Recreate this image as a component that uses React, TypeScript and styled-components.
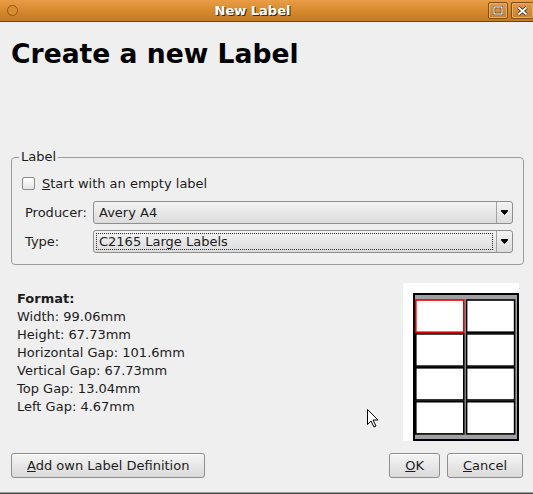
import styled, { createGlobalStyle } from "styled-components";

const GlobalStyle = createGlobalStyle`
  html, body {
    margin: 0;
    padding: 0;
    background: #efefef;
  }
  body {
    font-family: "DejaVu Sans", "Liberation Sans", sans-serif;
    font-size: 13px;
    color: #1c1c1c;
  }
`;

const Window = styled.div`
  position: relative;
  width: 533px;
  height: 494px;
  overflow: hidden;
  display: flex;
  flex-direction: column;
  background: #efefef;
  border-bottom: 1px solid #4a4a4a;
  box-shadow: inset 0 -1px 0 #9a9a9a;
  box-sizing: border-box;
`;

const TitleBar = styled.div`
  height: 21px;
  flex: none;
  display: flex;
  align-items: center;
  background: linear-gradient(#e99d45, #d98b2f 45%, #c47a22);
  border-bottom: 1px solid #6d4615;
`;

const WindowMenu = styled.div`
  width: 9px;
  height: 9px;
  margin-left: 7px;
  border-radius: 50%;
  border: 1px solid #8c5a1c;
  background: #d98c31;
`;

const Title = styled.div`
  flex: 1;
  text-align: center;
  padding-left: 2px;
  font-weight: bold;
  font-size: 13px;
  color: #ffffff;
  text-shadow: 1px 1px 0 #3d2808;
`;

const TitleButton = styled.div<{ $last?: boolean }>`
  width: ${({ $last }) => ($last ? "21px" : "18px")};
  height: 15px;
  margin-left: 3px;
  display: flex;
  align-items: center;
  justify-content: center;
  border: 1px solid #7b4f17;
  border-right-width: ${({ $last }) => ($last ? "0" : "1px")};
  border-radius: 2px;
  background: linear-gradient(#dd9a48, #c7802c);
  box-shadow: inset 0 0 0 1px #e9b060;
`;

const Body = styled.div`
  flex: 1;
  display: flex;
  flex-direction: column;
`;

const Heading = styled.h1`
  margin: 16px 0 0 11px;
  font-size: 26.6px;
  line-height: 32px;
  font-weight: bold;
  color: #000;
`;

const Group = styled.fieldset`
  margin: 79px 9px 0 11px;
  padding: 8px 10px 11px 10px;
  border: 1px solid #9c9c9c;
  border-radius: 4px;
  min-width: 0;
`;

const Legend = styled.legend`
  margin-left: -3px;
  padding: 0 2px;
  line-height: 16px;
`;

const CheckRow = styled.label`
  display: flex;
  align-items: center;
  gap: 7px;
  height: 20px;
  margin-bottom: 8px;
`;

const CheckBox = styled.span`
  width: 11px;
  height: 11px;
  border: 1px solid #8c8c8c;
  border-radius: 2px;
  background: linear-gradient(#ffffff, #e6e6e6);
`;

const FormGrid = styled.div`
  display: grid;
  grid-template-columns: 65px 1fr;
  column-gap: 6px;
  row-gap: 6px;
  align-items: center;
`;

const FieldLabel = styled.span`
  padding-left: 3px;
`;

const Combo = styled.div`
  height: 21px;
  display: flex;
  align-items: stretch;
  border: 1px solid #8e8e8e;
  border-radius: 3px;
  background: linear-gradient(#f3f3f3, #dcdcdc);
`;

const ComboText = styled.div<{ $focused?: boolean }>`
  flex: 1;
  display: flex;
  align-items: center;
  margin: 2px 3px 2px 2px;
  padding-left: 2px;
  border: 1px dotted ${({ $focused }) => ($focused ? "#2a2a2a" : "transparent")};
`;

const ComboArrow = styled.div`
  width: 15px;
  flex: none;
  display: flex;
  align-items: center;
  justify-content: center;
  border-left: 1px solid #a2a2a2;
`;

const InfoRow = styled.div`
  display: flex;
  justify-content: space-between;
  margin: 18px 14px 0 17px;
`;

const FormatList = styled.div`
  padding-top: 7px;
  line-height: 18px;
`;

const FormatTitle = styled.div`
  font-weight: bold;
`;

const Preview = styled.div`
  width: 106px;
  height: 148px;
  padding: 10px 0 0 10px;
  background: #ffffff;
`;

const ButtonRow = styled.div`
  display: flex;
  gap: 7px;
  margin: 12px 10px 0 11px;
`;

const Spacer = styled.div`
  flex: 1;
`;

const Button = styled.button`
  height: 25px;
  padding: 0 15px;
  font-family: "DejaVu Sans", "Liberation Sans", sans-serif;
  font-size: 13px;
  color: #1c1c1c;
  border: 1px solid #8e8e8e;
  border-radius: 3px;
  background: linear-gradient(#f5f5f5, #dadada);
  box-shadow: inset 0 1px 0 #ffffff;
`;

const Cursor = styled.svg`
  position: absolute;
  left: 366px;
  top: 408px;
`;

const Arrow = () => (
  <svg width="7" height="5" viewBox="0 0 7 5">
    <path d="M0 0.5h7M0.5 1.5h6L3.5 4.5z" stroke="#000" fill="#000" strokeWidth="1" />
  </svg>
);

const Mn = ({ children }: { children: string }) => <u>{children}</u>;

const formatLines = [
  "Width: 99.06mm",
  "Height: 67.73mm",
  "Horizontal Gap: 101.6mm",
  "Vertical Gap: 67.73mm",
  "Top Gap: 13.04mm",
  "Left Gap: 4.67mm",
];

const SheetPreview = () => {
  // page 210mm wide drawn at 0.5px/mm
  const cells = [];
  for (let r = 0; r < 4; r++) {
    for (let c = 0; c < 2; c++) {
      cells.push(
        <rect
          key={`${r}-${c}`}
          x={2.8 + c * 50.8}
          y={7 + r * 33.9}
          width={48}
          height={32.2}
          fill="#fff"
          stroke={r === 0 && c === 0 ? "#e00000" : "#000"}
          strokeWidth="1.6"
        />
      );
    }
  }
  return (
    <svg width="106" height="148" viewBox="0 0 106 148">
      <rect x="1" y="1" width="104" height="146" fill="#a0a0a4" stroke="#000" strokeWidth="2" />
      {cells}
    </svg>
  );
};

export default function App() {
  return (
    <Window>
      <GlobalStyle />
      <TitleBar>
        <WindowMenu />
        <Title>New Label</Title>
        <TitleButton>
          <svg width="10" height="9" viewBox="0 0 10 9">
            <rect x="1" y="1" width="8" height="7" fill="none" stroke="#3a2508" strokeWidth="2.4" />
            <rect x="1" y="1" width="8" height="7" fill="none" stroke="#fff" strokeWidth="1.2" />
          </svg>
        </TitleButton>
        <TitleButton $last>
          <svg width="11" height="10" viewBox="0 0 11 10">
            <path d="M1.5 1.5l8 7M9.5 1.5l-8 7" stroke="#3a2508" strokeWidth="3.4" />
            <path d="M1.5 1.5l8 7M9.5 1.5l-8 7" stroke="#fff" strokeWidth="1.8" />
          </svg>
        </TitleButton>
      </TitleBar>
      <Body>
        <Heading>Create a new Label</Heading>
        <Group>
          <Legend>Label</Legend>
          <CheckRow>
            <CheckBox />
            <span>
              <Mn>S</Mn>tart with an empty label
            </span>
          </CheckRow>
          <FormGrid>
            <FieldLabel>Producer:</FieldLabel>
            <Combo>
              <ComboText>Avery A4</ComboText>
              <ComboArrow>
                <Arrow />
              </ComboArrow>
            </Combo>
            <FieldLabel>Type:</FieldLabel>
            <Combo>
              <ComboText $focused>C2165 Large Labels</ComboText>
              <ComboArrow>
                <Arrow />
              </ComboArrow>
            </Combo>
          </FormGrid>
        </Group>
        <InfoRow>
          <FormatList>
            <FormatTitle>Format:</FormatTitle>
            {formatLines.map((l) => (
              <div key={l}>{l}</div>
            ))}
          </FormatList>
          <Preview>
            <SheetPreview />
          </Preview>
        </InfoRow>
        <ButtonRow>
          <Button>
            <Mn>A</Mn>dd own Label Definition
          </Button>
          <Spacer />
          <Button>
            <Mn>O</Mn>K
          </Button>
          <Button>
            <Mn>C</Mn>ancel
          </Button>
        </ButtonRow>
      </Body>
      <Cursor width="13" height="20" viewBox="0 0 13 20">
        <path
          d="M1.5 1.5v15l3.5-3.5 3 6 2-1-3-6h5z"
          fill="#fff"
          stroke="#000"
          strokeWidth="1"
          strokeLinejoin="miter"
        />
      </Cursor>
    </Window>
  );
}
